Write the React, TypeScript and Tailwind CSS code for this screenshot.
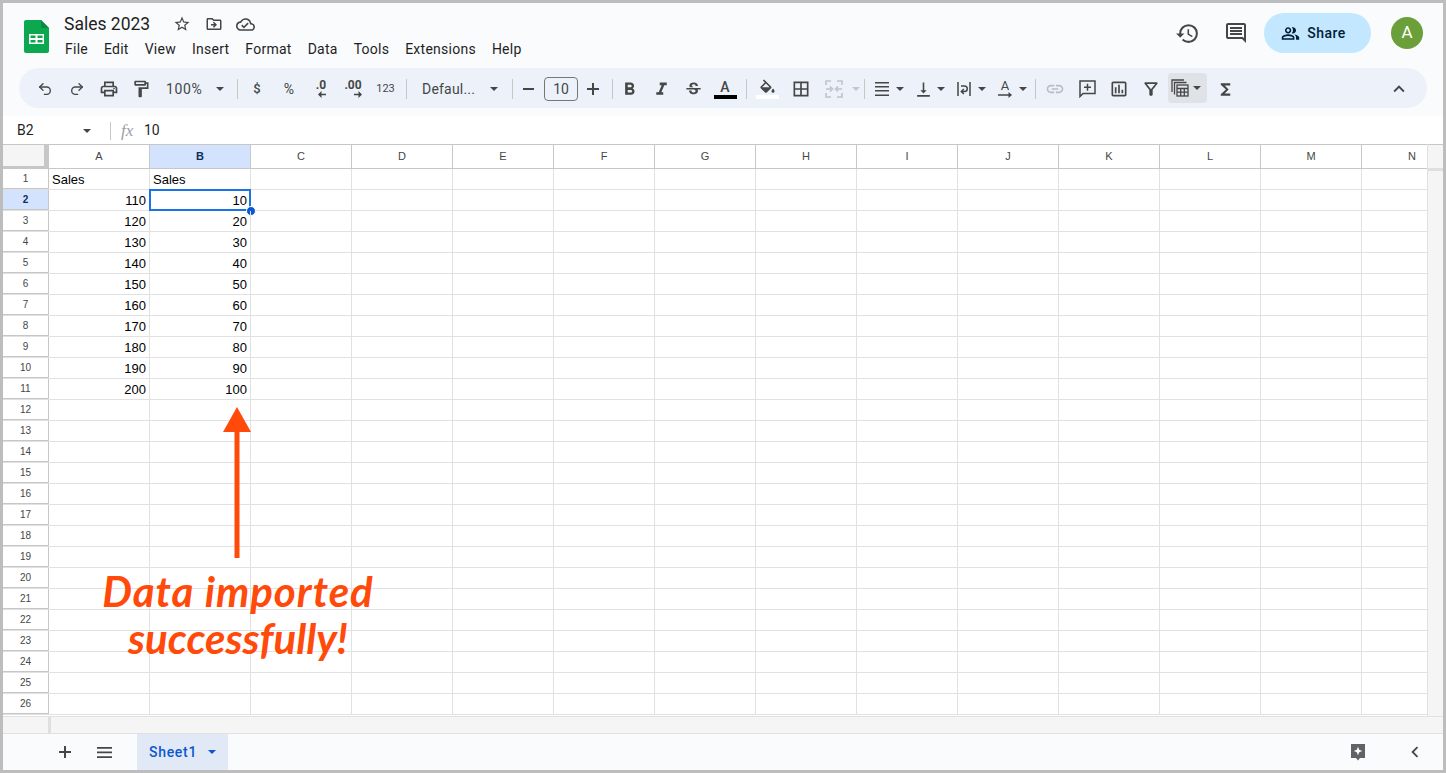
import { ReactNode } from 'react';
import { Redo2, Undo2 } from 'lucide-react';
import {
  MdBorderAll,
  MdExpandLess,
  MdFormatBold,
  MdFormatItalic,
  MdFunctions,
  MdHistory,
  MdKeyboardArrowLeft,
  MdLink,
  MdOutlineCloudDone,
  MdOutlineComment,
  MdOutlineDriveFileMove,
  MdOutlineFilterAlt,
  MdOutlineFormatPaint,
  MdOutlineInsertChart,
  MdOutlinePeopleAlt,
  MdOutlinePrint,
  MdOutlineStarBorder,
  MdStrikethroughS,
  MdVerticalAlignBottom,
} from 'react-icons/md';

const menus = ['File', 'Edit', 'View', 'Insert', 'Format', 'Data', 'Tools', 'Extensions', 'Help'];
const columns = ['A', 'B', 'C', 'D', 'E', 'F', 'G', 'H', 'I', 'J', 'K', 'L', 'M', 'N'];
const rows = Array.from({ length: 26 }, (_, i) => i + 1);

function Caret({ color = 'fill-[#444746]' }: { color?: string }) {
  return (
    <svg width="8" height="4" viewBox="0 0 10 5" className={color}>
      <path d="M0 0h10L5 5z" />
    </svg>
  );
}

function Btn({ children, w = 'w-[32px]' }: { children: ReactNode; w?: string }) {
  return <div className={`${w} h-full flex items-center justify-center shrink-0 text-[#444746]`}>{children}</div>;
}

function Sep({ ml = 'mx-[4px]' }: { ml?: string }) {
  return <div className={`w-px h-[20px] bg-[#c7c7c7] shrink-0 ${ml}`} />;
}

function DropBtn({ icon }: { icon: ReactNode }) {
  return (
    <div className="w-[41px] h-full flex items-center shrink-0 text-[#444746]">
      <div className="w-[22px] flex justify-center">{icon}</div>
      <div className="w-[14px] flex justify-center"><Caret /></div>
    </div>
  );
}

function SheetsLogo() {
  return (
    <svg width="25" height="33" viewBox="0 0 25 33">
      <path d="M2 0h15l8 8v23a2 2 0 0 1-2 2H2a2 2 0 0 1-2-2V2a2 2 0 0 1 2-2z" fill="#0ca84f" />
      <path d="M17 0l8 8h-8z" fill="#0a8a40" />
      <path d="M5 14h15v10H5z" fill="#fff" />
      <path d="M6.500 15.500h5v2.600h-5zM13.500 15.500h5v2.600h-5zM6.500 20h5v2.600h-5zM13.500 20h5v2.600h-5z" fill="#0ca84f" />
    </svg>
  );
}

function MergeIcon() {
  return (
    <svg width="18" height="18" viewBox="0 0 18 18" fill="none" stroke="#bfc3c7" strokeWidth="1.6">
      <path d="M1 5V1h5M12 1h5v4M1 13v4h5M12 17h5v-4" />
      <path d="M1 9h5M17 9h-5M5 6.500 7.500 9 5 11.500M13 6.500 10.500 9 13 11.500" />
    </svg>
  );
}

function WrapIcon() {
  return (
    <svg width="14" height="16" viewBox="0 0 14 16" fill="none" stroke="#444746" strokeWidth="1.5">
      <path d="M1 1v14M13 1v14" />
      <path d="M4 5h3.500a2 2 0 0 1 0 5.500H5M6.800 8 4.300 10.500 6.800 13" />
    </svg>
  );
}

function AlignIcon() {
  return (
    <svg width="14" height="14" viewBox="0 0 14 14" fill="#444746">
      <path d="M0 0h14v1.600H0zM0 4h14v1.600H0zM0 8h14v1.600H0zM0 12.400h14V14H0z" />
    </svg>
  );
}

function FillIcon() {
  return (
    <svg width="19" height="17" viewBox="0 0 24 18" fill="#444746">
      <path d="M16.560 8.940 7.620 0 6.210 1.410l2.380 2.380-5.150 5.150c-.59.59-.59 1.540 0 2.120l5.500 5.500c.29.29.68.44 1.060.44s.77-.15 1.060-.44l5.500-5.500c.59-.58.59-1.530 0-2.120zM5.210 10 10 5.210 14.790 10H5.210zM19 11.500s-2 2.170-2 3.500c0 1.100.9 2 2 2s2-.9 2-2c0-1.330-2-3.500-2-3.500z" />
    </svg>
  );
}

function AddCommentIcon() {
  return (
    <svg width="17" height="18" viewBox="0 0 17 18" fill="none" stroke="#444746" strokeWidth="1.500">
      <path d="M1 1h15v12.500H4L1 16.500z" />
      <path d="M8.500 3.800v7M5 7.300h7" />
    </svg>
  );
}

function FunctionGroupIcon() {
  return (
    <svg width="18" height="18" viewBox="0 0 18 18" fill="none" stroke="#444746" strokeWidth="1.300">
      <path d="M1 13V1h12" />
      <path d="M3.500 15.500v-12h12" />
      <rect x="6" y="6" width="11" height="11" fill="#dfe3e8" />
      <path d="M6 9.500h11M6 13.200h11M9.700 9.500V17M13.300 9.500V17" />
    </svg>
  );
}

function ExploreIcon() {
  return (
    <svg width="14" height="17" viewBox="0 0 14 17">
      <path d="M0 0h14v14H9l-2 2.500L5 14H0z" fill="#5f6368" />
      <path d="M7 2.800 8.200 5.800 11.200 7 8.200 8.200 7 11.200 5.800 8.200 2.800 7 5.800 5.800z" fill="#fff" />
    </svg>
  );
}

function ArrowUnder({ flip = false }: { flip?: boolean }) {
  return (
    <svg width="8" height="7" viewBox="0 0 8 7" fill="#444746" className={flip ? 'rotate-180' : ''}>
      <path d="M0 3.500 3.500 0v2.700H8v1.600H3.500V7z" />
    </svg>
  );
}

function Toolbar() {
  return (
    <div className="mx-4 h-[40px] rounded-full bg-[#edf2fa] flex items-center pl-[10px] pt-[2px] font-['Roboto',sans-serif]">
      <Btn><Undo2 size={16} strokeWidth={2} /></Btn>
      <Btn><Redo2 size={16} strokeWidth={2} /></Btn>
      <Btn><MdOutlinePrint size={20} /></Btn>
      <Btn><MdOutlineFormatPaint size={20} /></Btn>
      <div className="w-[73px] h-full flex items-center justify-between pl-[9px] pr-[6px] shrink-0 text-[14px] text-[#444746] tracking-[0.6px]">
        100%
        <Caret />
      </div>
      <Sep ml="ml-[7px] mr-[3px]" />
      <Btn><span className="text-[13px] font-medium">$</span></Btn>
      <Btn><span className="text-[14px]">%</span></Btn>
      <Btn>
        <div className="flex flex-col items-end leading-none">
          <span className="text-[12px] font-bold leading-[11px]">.0</span>
          <ArrowUnder />
        </div>
      </Btn>
      <Btn>
        <div className="flex flex-col items-end leading-none">
          <span className="text-[12px] font-bold leading-[11px]">.00</span>
          <ArrowUnder flip />
        </div>
      </Btn>
      <Btn w="w-[33px]"><span className="text-[11px]">123</span></Btn>
      <Sep />
      <div className="w-[99px] h-full flex items-center justify-between pl-[11px] pr-[12px] shrink-0 text-[14px] text-[#444746] tracking-[0.2px]">
        Defaul...
        <Caret />
      </div>
      <Sep ml="ml-[2px] mr-[0px]" />
      <Btn w="w-[31px]"><div className="w-[11px] h-[2px] bg-[#444746]" /></Btn>
      <div className="w-[34px] h-[24px] shrink-0 border border-[#747775] rounded-[4px] flex items-center justify-center text-[14px] text-[#444746]">10</div>
      <Btn w="w-[30px]">
        <svg width="12" height="12" viewBox="0 0 12 12" fill="#444746"><path d="M5 0h2v5h5v2H7v5H5V7H0V5h5z" /></svg>
      </Btn>
      <Sep ml="ml-[4px] mr-[0px]" />
      <Btn><MdFormatBold size={21} /></Btn>
      <Btn><MdFormatItalic size={21} /></Btn>
      <Btn><MdStrikethroughS size={19} /></Btn>
      <Btn>
        <div className="flex flex-col items-center">
          <span className="text-[14px] leading-[15px] font-medium">A</span>
          <div className="w-[23px] h-[4px] bg-black" />
        </div>
      </Btn>
      <Sep ml="ml-[5px] mr-[4px]" />
      <Btn>
        <div className="flex flex-col items-center -mt-[2px]">
          <FillIcon />
          <div className="w-[23px] h-[4px] bg-white" />
        </div>
      </Btn>
      <Btn w="w-[36px]"><MdBorderAll size={20} /></Btn>
      <Btn w="w-[30px]"><MergeIcon /></Btn>
      <div className="w-[14px] shrink-0 flex justify-center"><Caret color="fill-[#c4c7c9]" /></div>
      <Sep ml="ml-[1px] mr-[6px]" />
      <DropBtn icon={<AlignIcon />} />
      <DropBtn icon={<MdVerticalAlignBottom size={19} />} />
      <DropBtn icon={<WrapIcon />} />
      <DropBtn
        icon={
          <div className="flex flex-col items-center">
            <span className="text-[13px] leading-[12px]">A</span>
            <svg width="14" height="6" viewBox="0 0 14 6" fill="#444746"><path d="M0 2.300h10.500V0L14 3l-3.500 3V3.700H0z" /></svg>
          </div>
        }
      />
      <Sep ml="ml-[0px] mr-[3px]" />
      <Btn><MdLink size={20} color="#b9bcc0" /></Btn>
      <Btn><AddCommentIcon /></Btn>
      <Btn><MdOutlineInsertChart size={20} /></Btn>
      <Btn><MdOutlineFilterAlt size={20} /></Btn>
      <div className="w-[39px] h-[30px] ml-px -mt-[2px] rounded-[4px] bg-[#dfe3e8] flex items-center gap-[4px] pl-[3px] shrink-0"><FunctionGroupIcon /><Caret /></div>
      <Btn w="w-[36px]"><MdFunctions size={19} /></Btn>
      <div className="flex-1" />
      <Btn w="w-[28px]"><MdExpandLess size={22} /></Btn>
      <div className="w-[14px] shrink-0" />
    </div>
  );
}

function Grid() {
  return (
    <div className="h-[572px] flex font-['Liberation_Sans',sans-serif] overflow-hidden bg-white">
      <div className="w-[1424px] shrink-0 relative overflow-hidden">
        <div className="flex h-[25px] border-y border-[#c7c7c7]">
          <div className="w-[46px] h-[24px] shrink-0 bg-[#f5f5f5] border-r-[5px] border-b-[3px] border-[#c7c7c7]" />
          {columns.map((c, i) => (
            <div
              key={c}
              className={`w-[101px] shrink-0 border-r border-[#c7c7c7] flex items-center justify-center text-[11px] ${
                i === 1 ? 'bg-[#d3e3fd] text-[#0b2e5c] font-bold' : 'text-[#444746]'
              }`}
            >
              {c}
            </div>
          ))}
        </div>
        {rows.map((r) => (
          <div key={r} className="flex h-[21px] border-b border-[#e1e1e1]">
            <div
              className={`w-[46px] shrink-0 border-r border-b border-[#c7c7c7] flex items-center justify-center text-[10px] ${
                r === 2 ? 'bg-[#d3e3fd] text-[#0b2e5c] font-bold' : 'text-[#444746]'
              }`}
            >
              {r}
            </div>
            {columns.map((c) => {
              let value = '';
              let left = false;
              if (r === 1 && (c === 'A' || c === 'B')) {
                value = 'Sales';
                left = true;
              } else if (r >= 2 && r <= 11 && c === 'A') {
                value = String(90 + r * 10);
              } else if (r >= 2 && r <= 11 && c === 'B') {
                value = String((r - 1) * 10);
              }
              const active = r === 2 && c === 'B';
              return (
                <div
                  key={c}
                  className={`w-[101px] shrink-0 relative border-r border-[#e1e1e1] flex items-center px-[3px] pt-[2px] text-[13px] text-black ${
                    left ? 'justify-start' : 'justify-end'
                  }`}
                >
                  {value}
                  {active && (
                    <>
                      <div className="absolute -left-px -top-px w-[102px] h-[22px] border-2 border-[#1a73e8]" />
                      <div className="absolute -right-[6px] -bottom-[6px] w-[10px] h-[10px] rounded-full bg-[#0b57d0] border border-white" />
                    </>
                  )}
                </div>
              );
            })}
          </div>
        ))}
        <div className="absolute left-[220px] top-[263px]">
          <svg width="28" height="151" viewBox="0 0 28 151" fill="#ff4a0a">
            <path d="M14 0l14 25H16.500v126h-5V25H0z" />
          </svg>
        </div>
        <div className="absolute left-[80px] top-[424px] w-[310px] text-center text-[#ff4a0a] font-['Lato',sans-serif] italic font-bold text-[42px] leading-[47px]">
          <div className="tracking-[1px]">Data imported</div>
          <div>successfully!</div>
        </div>
      </div>
      <div className="flex-1 bg-[#f5f5f5] border-l border-[#e1e1e1] flex flex-col">
        <div className="h-[24px] border-t border-[#c7c7c7] bg-[#f5f5f5] shrink-0" />
        <div className="h-[3px] bg-[#dfdfdf] shrink-0" />
      </div>
    </div>
  );
}

export default function App() {
  return (
    <div className="w-[1446px] h-[773px] border-[3px] border-[#bdbdbd] bg-[#f9fbfd] flex flex-col overflow-hidden font-['Roboto',sans-serif]">
      {/* title bar */}
      <div className="h-[65px] flex shrink-0 pl-[21px] pr-[20px]">
        <div className="pt-[17px] shrink-0"><SheetsLogo /></div>
        <div className="ml-[15px] pt-[9px]">
          <div className="flex items-center h-[24px] text-[#444746]">
            <span className="text-[17.500px] text-[#1f1f1f] mr-[23px]">Sales 2023</span>
            <MdOutlineStarBorder size={18} />
            <MdOutlineDriveFileMove size={18} className="ml-[14px]" />
            <MdOutlineCloudDone size={19} className="ml-[13px]" />
          </div>
          <div className="flex gap-[16px] mt-[3px] text-[14px] leading-[20px] text-[#1f1f1f] tracking-[0.25px] ml-px">
            {menus.map((m) => (
              <span key={m}>{m}</span>
            ))}
          </div>
        </div>
        <div className="flex-1" />
        <div className="flex items-start pt-[10px] text-[#444746]">
          <div className="h-[40px] flex items-center"><MdHistory size={25} /></div>
          <div className="h-[40px] flex items-center ml-[24px]"><MdOutlineComment size={24} /></div>
          <div className="ml-[16px] w-[107px] h-[40px] rounded-full bg-[#c2e7ff] flex items-center justify-center gap-[7px] pr-[8px] text-[14px] font-medium tracking-[0.5px] text-[#001d35]">
            <MdOutlinePeopleAlt size={19} />
            Share
          </div>
          <div className="ml-[20px] mt-[4px] w-[32px] h-[32px] rounded-full bg-[#6a9f3a] flex items-center justify-center text-white text-[17px]">A</div>
        </div>
      </div>

      <Toolbar />

      {/* formula bar */}
      <div className="h-[28px] mt-[8px] pt-px bg-white flex items-center shrink-0 text-[14px] text-[#1f1f1f]">
        <div className="w-[96px] pl-[14px] pr-[8px] flex items-center justify-between">
          B2
          <Caret />
        </div>
        <div className="w-px h-[18px] bg-[#c7c7c7] ml-[11px]" />
        <span className="ml-[10px] w-[23px] font-['Liberation_Serif',serif] italic text-[#9aa0a6] text-[17px]">fx</span>
        <span>10</span>
      </div>

      <Grid />

      {/* horizontal scrollbar */}
      <div className="h-[17px] bg-[#f5f5f5] border-t border-[#e1e1e1] flex shrink-0">
        <div className="w-[45px]" />
        <div className="w-[3px] bg-[#dfdfdf]" />
      </div>

      {/* sheet tabs */}
      <div className="flex-1 border-t border-[#e1e1e1] flex items-stretch text-[#444746]">
        <div className="w-[134px] shrink-0 flex items-center pl-[56px] gap-[26px]">
          <svg width="12" height="12" viewBox="0 0 12 12" fill="#444746"><path d="M5 0h2v5h5v2H7v5H5V7H0V5h5z" /></svg>
          <svg width="15" height="11" viewBox="0 0 15 11" fill="#444746"><path d="M0 0h15v1.700H0zM0 4.600h15v1.700H0zM0 9.300h15V11H0z" /></svg>
        </div>
        <div className="w-[91px] bg-[#e1e9f7] flex items-center pl-[12px] gap-[11px] text-[14px] font-medium tracking-[0.7px] text-[#0b57d0]">
          Sheet1
          <Caret color="fill-[#0b57d0]" />
        </div>
        <div className="flex-1" />
        <div className="flex items-center mr-[17px] gap-[39px]">
          <ExploreIcon />
          <MdKeyboardArrowLeft size={22} />
        </div>
      </div>
    </div>
  );
}
